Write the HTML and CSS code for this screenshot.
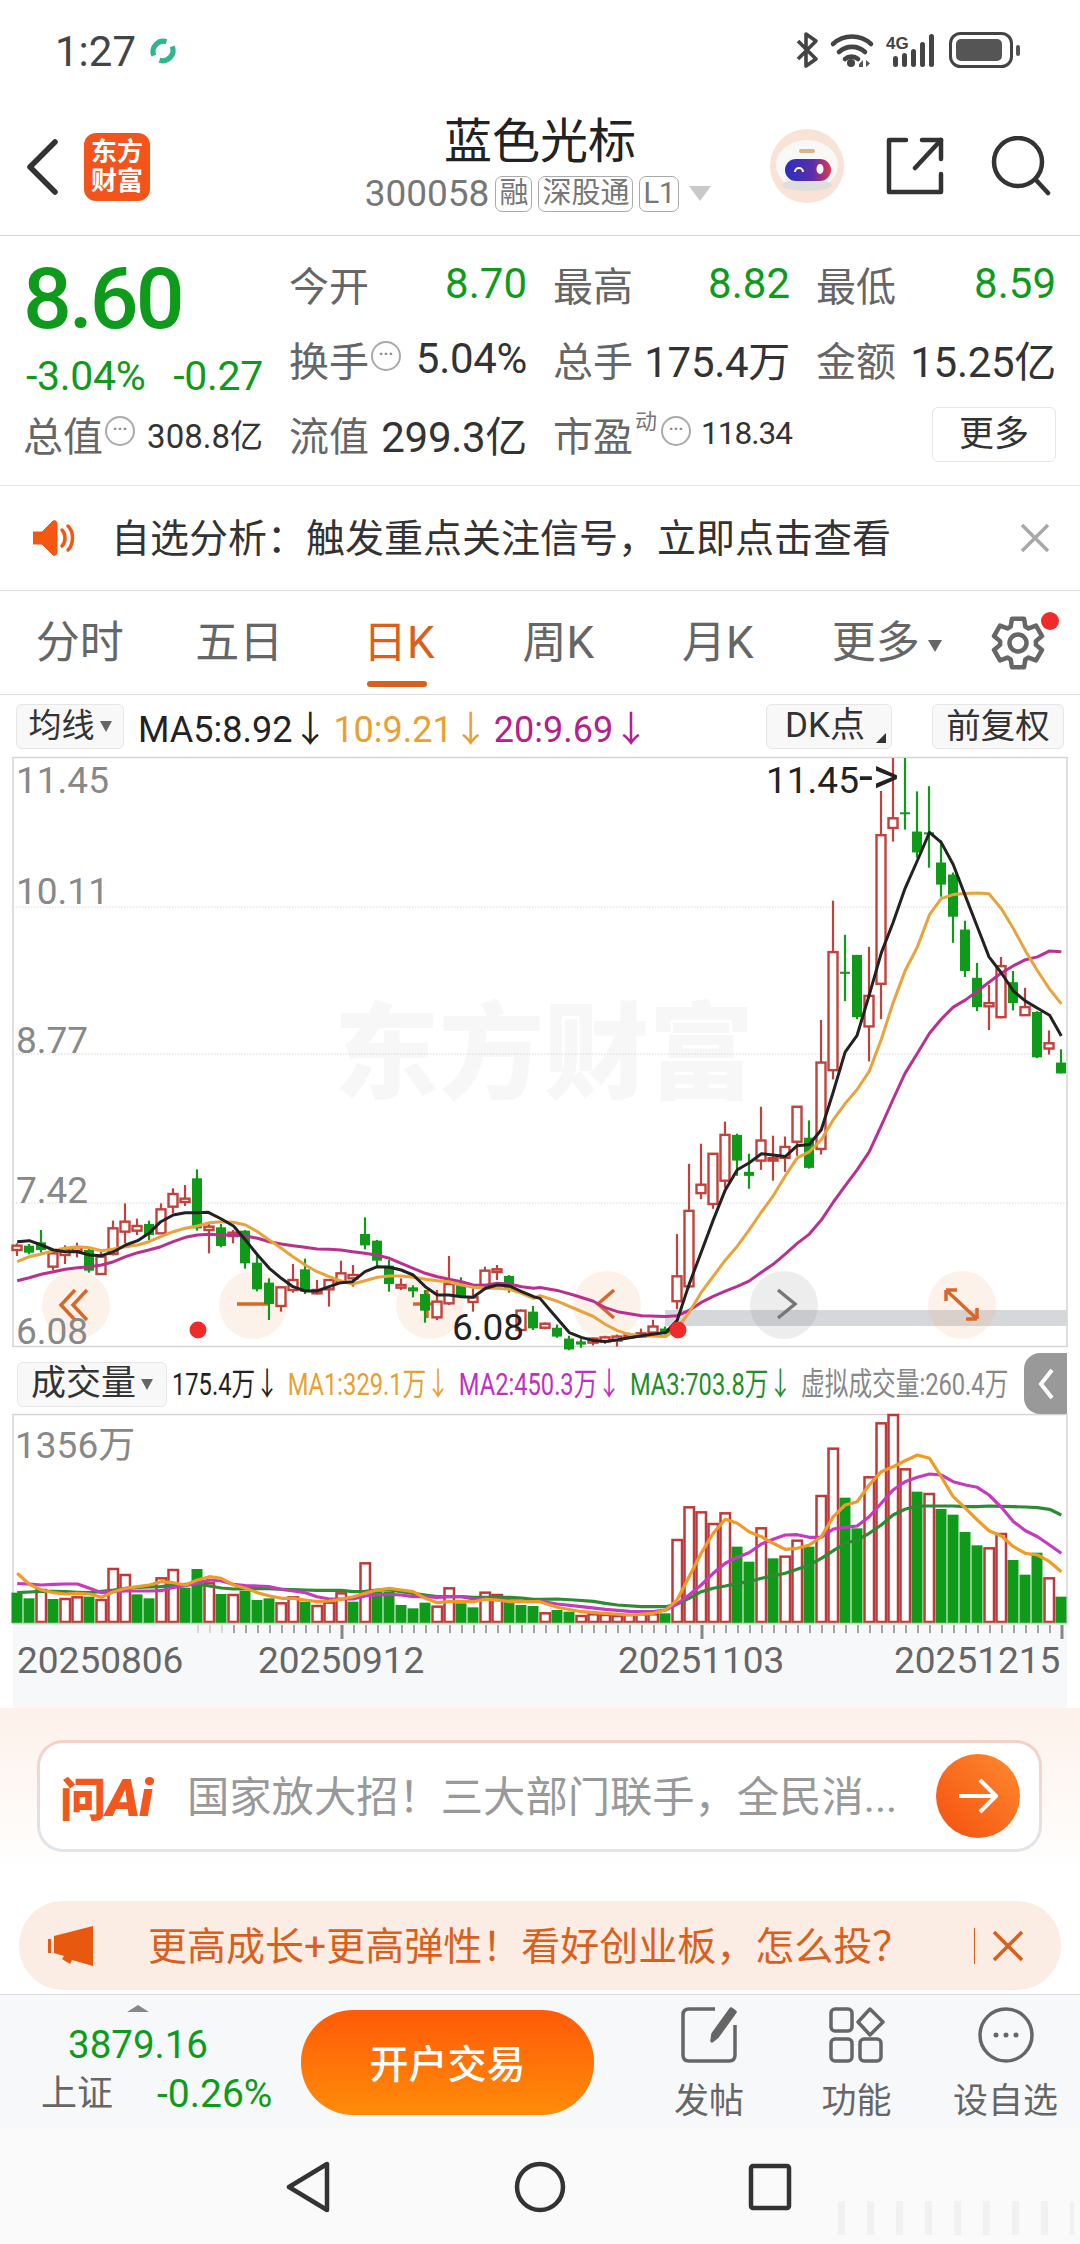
FILE: index.html
```html
<!DOCTYPE html>
<html lang="zh-CN">
<head>
    <meta charset="UTF-8">
    <meta name="viewport" content="width=device-width, initial-scale=1.0">
    <title>蓝色光标</title>
    <link rel="stylesheet" href="styles.css">
</head>
<body>
    <div class="status-bar">
        <div class="status-left">
            <span class="clock">1:27</span>
            <svg class="sync-icon" width="30" height="30" viewBox="0 0 26 26" fill="none" stroke="#2fb58f" stroke-width="4.5">
                <path d="M5 17a9 9 0 0 1 11-12"/>
                <path d="M21 9a9 9 0 0 1-11 12"/>
            </svg>
        </div>
        <svg class="status-icons" width="240" height="40" viewBox="795 30 240 40">
            <path d="M798 41 L816 59 L806 66 V34 L816 41 L798 59" fill="none" stroke="#444" stroke-width="3.6" stroke-linejoin="round"/>
            <g fill="none" stroke="#444" stroke-width="4.6" stroke-linecap="round">
                <path d="M833 44a28 28 0 0 1 38 0"/>
                <path d="M839 52a19 19 0 0 1 26 0"/>
                <path d="M845 59a10 10 0 0 1 13 0"/>
            </g>
            <circle cx="851" cy="63" r="4" fill="#444"/>
            <path d="M859 64l4-4v7h-4zM866 60l4 3.5-4 3.5z" fill="#555"/>
            <text class="net-label" x="886" y="49">4G</text>
            <g fill="#444">
                <rect x="893" y="56" width="5" height="11" rx="2.5"/>
                <rect x="902" y="53" width="5" height="14" rx="2.5"/>
                <rect x="911" y="49" width="5" height="18" rx="2.5"/>
                <rect x="920" y="42" width="5" height="25" rx="2.5"/>
                <rect x="929" y="34" width="5" height="33" rx="2.5"/>
            </g>
            <rect x="950.5" y="33.5" width="61" height="33" rx="10" fill="none" stroke="#444" stroke-width="3"/>
            <rect x="956" y="39" width="46" height="22" rx="5" fill="#555"/>
            <rect x="1016" y="45" width="4" height="11" rx="2" fill="#555"/>
        </svg>
    </div>

    <div class="top-bar">
        <div class="top-left">
            <svg width="32" height="56" viewBox="0 0 32 56" fill="none" stroke="#333" stroke-width="5.5" stroke-linecap="round" stroke-linejoin="round">
                <path d="M29 3 L4 28 L29 53"/>
            </svg>
            <div class="brand-logo">东方<br>财富</div>
        </div>
        <div class="stock-title">
            <h1>蓝色光标</h1>
            <div class="stock-sub">
                <span class="stock-code">300058</span>
                <span class="tag">融</span>
                <span class="tag">深股通</span>
                <span class="tag">L1</span>
                <span class="tri-down"></span>
            </div>
        </div>
        <div class="top-right">
            <svg width="76" height="76" viewBox="0 0 76 76">
                <defs>
                    <linearGradient id="visor" x1="0" x2="1" y1="0" y2="0">
                        <stop offset="0" stop-color="#2b2fc0"/>
                        <stop offset="0.6" stop-color="#5a2ea8"/>
                        <stop offset="1" stop-color="#dc3a4e"/>
                    </linearGradient>
                </defs>
                <circle cx="38" cy="38" r="37" fill="#f9e3d6"/>
                <ellipse cx="38" cy="37" rx="31" ry="25" fill="#f8f8f7"/>
                <ellipse cx="38" cy="57" rx="25" ry="6" fill="#dfdedc"/>
                <rect x="30" y="21" width="16" height="4" rx="2" fill="#d8b48a"/>
                <rect x="16" y="31" width="46" height="22" rx="11" fill="url(#visor)"/>
                <path d="M26 44a4 4 0 0 1 8 0" fill="none" stroke="#fff" stroke-width="2"/>
                <ellipse cx="51" cy="41" rx="3.5" ry="5" fill="#fff"/>
            </svg>
            <svg class="share-icon" width="58" height="58" viewBox="0 0 58 58" fill="none" stroke="#333" stroke-width="4.5" stroke-linecap="round" stroke-linejoin="round">
                <path d="M20 3 H3 V55 H55 V37"/>
                <path d="M36 3 H55 V22"/>
                <path d="M55 3 L29 31"/>
            </svg>
            <svg class="search-icon" width="60" height="60" viewBox="0 0 60 60" fill="none" stroke="#333" stroke-width="4.5" stroke-linecap="round">
                <circle cx="27" cy="26" r="24"/>
                <path d="M45 44 L57 57"/>
            </svg>
        </div>
    </div>

    <div class="quote">
        <div class="quote-main">
            <div class="price">8.60</div>
            <div class="price-change"><span>-3.04%</span><span>-0.27</span></div>
        </div>
        <div class="cell"><span class="lbl">今开</span><span class="num-green">8.70</span></div>
        <div class="cell"><span class="lbl">最高</span><span class="num-green">8.82</span></div>
        <div class="cell"><span class="lbl">最低</span><span class="num-green">8.59</span></div>
        <div class="cell"><span class="lbl">换手<i class="dots">···</i></span><span class="num">5.04%</span></div>
        <div class="cell"><span class="lbl">总手</span><span class="num">175.4万</span></div>
        <div class="cell"><span class="lbl">金额</span><span class="num">15.25亿</span></div>
        <div class="cell total-cell"><span class="lbl">总值<i class="dots">···</i></span><span class="num-small">308.8亿</span></div>
        <div class="cell"><span class="lbl">流值</span><span class="num">299.3亿</span></div>
        <div class="cell pe-cell"><span class="lbl">市盈<sup>动</sup><i class="dots">···</i></span><span class="num-small">118.34</span></div>
        <div class="cell more-cell"><button class="more-btn">更多</button></div>
    </div>

    <div class="notice">
        <svg width="46" height="36" viewBox="0 0 46 36">
            <path d="M0 12 H9 L20 1 C23 0 24 2 24 4 V32 C24 34 23 36 20 35 L9 24 H0z" fill="#f4570f" stroke="#f4570f" stroke-linejoin="round"/>
            <path d="M29 10c4 4 4 12 0 16M35 6c6 6 6 18 0 24" fill="none" stroke="#f4570f" stroke-width="3.5" stroke-linecap="round"/>
        </svg>
        <span class="notice-text">自选分析：触发重点关注信号，立即点击查看</span>
        <svg class="notice-close" width="30" height="30" viewBox="0 0 30 30" stroke="#a8a8a8" stroke-width="3.5">
            <path d="M2 2 L28 28 M28 2 L2 28"/>
        </svg>
    </div>

    <div class="tabs">
        <div class="tab">分时</div>
        <div class="tab">五日</div>
        <div class="tab tab-on">日K</div>
        <div class="tab">周K</div>
        <div class="tab">月K</div>
        <div class="tab tab-more">更多<i class="tab-tri"></i></div>
        <div class="tab-gear">
            <svg width="58" height="60" viewBox="-29 -30 58 60" fill="none" stroke="#666" stroke-width="4.5" stroke-linejoin="round">
                <path d="M-7.32 -16.44 L-6.05 -24.26 L6.05 -24.26 L7.32 -16.44 L10.58 -14.56 L17.98 -17.37 L24.04 -6.89 L17.9 -1.88 L17.9 1.88 L24.04 6.89 L17.98 17.37 L10.58 14.56 L7.32 16.44 L6.05 24.26 L-6.05 24.26 L-7.32 16.44 L-10.58 14.56 L-17.98 17.37 L-24.04 6.89 L-17.9 1.88 L-17.9 -1.88 L-24.04 -6.89 L-17.98 -17.37 L-10.58 -14.56 Z"/>
                <circle r="8.5"/>
            </svg>
            <span class="red-dot"></span>
        </div>
    </div>

    <div class="k-toolbar">
        <button class="tool-btn avg-btn">均线<i class="mini-tri"></i></button>
        <div class="ma-legend">
            <span class="c-black">MA5:8.92↓</span>
            <span class="c-orange">10:9.21↓</span>
            <span class="c-pink">20:9.69↓</span>
        </div>
        <button class="tool-btn dk-btn">DK点</button>
        <button class="tool-btn fq-btn">前复权</button>
    </div>

    <svg class="chart" id="kline" width="1080" height="591" viewBox="0 757 1080 591">
        <text class="watermark" x="334" y="1090">东方财富</text>
        <rect class="frame" x="13" y="757.5" width="1054" height="589"/>
        <path class="grid-line" d="M13 907H1067M13 1054H1067M13 1203H1067"/>
        <rect x="665" y="1310" width="402" height="16" fill="#d5d7db"/>
        <g fill="#f4a26a" fill-opacity="0.14">
            <circle cx="76" cy="1305" r="34"/>
            <circle cx="253" cy="1305" r="34"/>
            <circle cx="430" cy="1305" r="34"/>
            <circle cx="607" cy="1305" r="34"/>
            <circle cx="962" cy="1305" r="34"/>
        </g>
        <circle cx="784" cy="1305" r="34" fill="#808080" fill-opacity="0.14"/>
        <g fill="none" stroke="#d8682a" stroke-width="3.5">
            <path d="M75 1290 L61 1305 L75 1320 M87 1290 L73 1305 L87 1320"/>
            <path d="M237 1304 H269"/>
            <path d="M413 1304 H441 M427 1290 V1318"/>
            <path d="M614 1290 L598 1304 L614 1318"/>
            <path d="M946 1290 H957 M946 1290 V1301 M946 1290 L977 1319 M977 1319 H966 M977 1319 V1308"/>
        </g>
        <path d="M778 1290 L795 1304 L778 1318" fill="none" stroke="#777" stroke-width="3.5"/>
        <g id="candles"></g>
        <g id="kLines"></g>
        <circle cx="198" cy="1330" r="8.5" fill="#ee2a2a"/>
        <circle cx="678" cy="1330" r="8.5" fill="#ee2a2a"/>
        <text class="axis" x="16" y="793">11.45</text>
        <text class="axis" x="16" y="904">10.11</text>
        <text class="axis" x="16" y="1053">8.77</text>
        <text class="axis" x="16" y="1203">7.42</text>
        <text class="axis" x="16" y="1344">6.08</text>
        <text class="mark" x="766" y="793">11.45<tspan class="mark-arrow">-&gt;</tspan></text>
        <text class="mark" x="452" y="1340">6.08</text>
    </svg>

    <div class="vol-toolbar">
        <button class="tool-btn vol-btn">成交量<i class="mini-tri"></i></button>
        <div class="vol-legend">
            <span class="c-black">175.4万↓</span>
            <span class="c-orange">MA1:329.1万↓</span>
            <span class="c-violet">MA2:450.3万↓</span>
            <span class="c-green">MA3:703.8万↓</span>
            <span class="c-gray">虚拟成交量:260.4万</span>
        </div>
        <div class="vol-handle">
            <svg width="16" height="32" viewBox="0 0 16 32" fill="none" stroke="#fff" stroke-width="4">
                <path d="M14 2 L3 16 L14 30"/>
            </svg>
        </div>
    </div>

    <svg class="chart" id="volume" width="1080" height="294" viewBox="0 1414 1080 294">
        <rect x="13" y="1624" width="1054" height="84" fill="#f7f8fa"/>
        <rect class="frame" x="13" y="1414.5" width="1054" height="209"/>
        <g id="volBars"></g>
        <path d="M13 1623.5H1067" stroke="#b9ddb9" stroke-width="1.5"/>
        <g id="volLines"></g>
        <g id="ticks"></g>
        <text class="axis" x="15" y="1458">1356万</text>
        <text class="date" x="17" y="1673">20250806</text>
        <text class="date" x="258" y="1673">20250912</text>
        <text class="date" x="618" y="1673">20251103</text>
        <text class="date" x="894" y="1673">20251215</text>
    </svg>

    <div class="ask-area">
        <div class="ask-box">
            <span class="ask-logo">问<em>Ai</em></span>
            <span class="ask-text">国家放大招！三大部门联手，全民消...</span>
            <div class="ask-go">
                <svg width="40" height="36" viewBox="0 0 40 36" fill="none" stroke="#fff" stroke-width="4" stroke-linejoin="round">
                    <path d="M1 18 H37 M22 2 L38 18 L22 34"/>
                </svg>
            </div>
        </div>
    </div>

    <div class="promo">
        <svg width="46" height="40" viewBox="0 0 46 40" fill="#e8590f">
            <rect x="0" y="13" width="3" height="14"/>
            <path d="M6 10 L45 0 V40 L24 34 L22 38 L14 33 L16 30 L6 27z"/>
        </svg>
        <span class="promo-text">更高成长+更高弹性！看好创业板，怎么投？</span>
        <span class="promo-sep"></span>
        <svg width="32" height="32" viewBox="0 0 32 32" stroke="#d9601c" stroke-width="3.5">
            <path d="M2 2 L30 30 M30 2 L2 30"/>
        </svg>
    </div>

    <div class="bottom-bar">
        <div class="index-box">
            <i class="tri-up"></i>
            <div class="index-val">3879.16</div>
            <div class="index-row"><span class="index-name">上证</span><span class="index-pct">-0.26%</span></div>
        </div>
        <button class="trade-btn">开户交易</button>
        <div class="bottom-actions">
            <div class="action">
                <svg width="56" height="56" viewBox="0 0 56 56" fill="none" stroke="#666" stroke-width="3.5" stroke-linejoin="round">
                    <path d="M34 2 H8 Q2 2 2 8 V48 Q2 54 8 54 H48 Q54 54 54 48 V18"/>
                    <path d="M50 2 L54 5 L36 30 L31 34 L32 27z" fill="#666"/>
                </svg>
                <span>发帖</span>
            </div>
            <div class="action">
                <svg width="56" height="56" viewBox="0 0 56 56" fill="none" stroke="#666" stroke-width="3.5" stroke-linejoin="round">
                    <rect x="2" y="2" width="21" height="22" rx="4"/>
                    <path d="M41 2 L54 15 L41 28 L29 15z"/>
                    <rect x="2" y="32" width="21" height="22" rx="4"/>
                    <rect x="31" y="32" width="21" height="22" rx="4"/>
                </svg>
                <span>功能</span>
            </div>
            <div class="action">
                <svg width="56" height="56" viewBox="0 0 56 56" fill="none" stroke="#666" stroke-width="3.5">
                    <circle cx="28" cy="28" r="26"/>
                    <g fill="#666" stroke="none">
                        <circle cx="18" cy="28" r="2.5"/>
                        <circle cx="28" cy="28" r="2.5"/>
                        <circle cx="38" cy="28" r="2.5"/>
                    </g>
                </svg>
                <span>设自选</span>
            </div>
        </div>
    </div>

    <div class="nav-bar">
        <svg width="46" height="52" viewBox="0 0 46 52" fill="none" stroke="#333" stroke-width="4.5" stroke-linejoin="round">
            <path d="M41 3 V49 L3 26z"/>
        </svg>
        <svg width="52" height="52" viewBox="0 0 52 52" fill="none" stroke="#333" stroke-width="4.5">
            <circle cx="26" cy="26" r="23"/>
        </svg>
        <svg width="44" height="48" viewBox="0 0 44 48" fill="none" stroke="#333" stroke-width="4.5" stroke-linejoin="round">
            <rect x="3" y="3" width="38" height="42" rx="2"/>
        </svg>
        <span class="nav-mark"></span>
    </div>

    <script src="chart.js"></script>
</body>
</html>
```

FILE: styles.css
```css
* {
    margin: 0;
    padding: 0;
    box-sizing: border-box;
}

body {
    width: 1080px;
    height: 2244px;
    overflow: hidden;
    background: white;
    color: #333;
    font-family: Roboto, 'Noto Sans CJK SC', sans-serif;
}

button {
    font-family: inherit;
    color: #333;
    background: none;
}

i {
    font-style: normal;
}

/* Status bar */
.status-bar {
    height: 90px;
    padding: 30px 45px 0 55px;
    display: flex;
    justify-content: space-between;
    align-items: flex-start;
}

.status-left {
    display: flex;
    align-items: center;
    gap: 12px;
    height: 42px;
}

.clock {
    font-size: 42px;
    color: #444;
}

.status-icons {
    display: block;
}

.net-label {
    font-family: 'Liberation Sans', sans-serif;
    font-size: 17px;
    font-weight: bold;
    fill: #444;
}

/* Title bar */
.top-bar {
    height: 146px;
    border-bottom: 1.5px solid #d9d9d9;
    display: grid;
    grid-template-columns: 1fr auto 1fr;
    align-items: center;
    position: relative;
}

.top-left {
    display: flex;
    align-items: center;
    gap: 26px;
    padding-left: 26px;
    margin-top: 9px;
}

.brand-logo {
    width: 66px;
    height: 68px;
    border-radius: 12px;
    background: #f2541b;
    color: white;
    font-size: 26px;
    font-weight: 700;
    line-height: 29px;
    text-align: center;
    padding-top: 5px;
}

.stock-title {
    text-align: center;
    margin-top: -2px;
}

.stock-title h1 {
    font-size: 48px;
    font-weight: 400;
    line-height: 62px;
    color: #222;
}

.stock-sub {
    display: flex;
    align-items: center;
    gap: 6px;
    height: 38px;
    margin-top: 2px;
    margin-left: -4px;
}

.stock-code {
    font-size: 37px;
    color: #777;
}

.tag {
    height: 36px;
    line-height: 32px;
    padding: 0 3px;
    border: 1.5px solid #aaa;
    border-radius: 7px;
    font-size: 29px;
    color: #777;
}

.tri-down {
    width: 0;
    height: 0;
    margin-left: 4px;
    border-left: 11px solid transparent;
    border-right: 11px solid transparent;
    border-top: 15px solid #c9c9c9;
}

.top-right {
    display: flex;
    align-items: center;
    justify-content: flex-end;
    padding-right: 29px;
    margin-top: 6px;
}

.share-icon {
    margin-left: 41px;
}

.search-icon {
    margin-left: 47px;
}

/* Quote block */
.quote {
    height: 250px;
    padding: 10px 0 0 27px;
    border-bottom: 1.5px solid #e6e6e6;
    display: grid;
    grid-template-columns: 236px 238px 237px 240px;
    grid-template-rows: 75px 75px 75px;
    column-gap: 26px;
    font-size: 40px;
}

.quote-main {
    grid-row: 1 / 3;
    padding-top: 15px;
    margin-left: -4px;
}

.price {
    font-size: 86px;
    font-weight: 500;
    line-height: 76px;
    letter-spacing: -3px;
    color: #0e9b1c;
}

.price-change {
    display: flex;
    justify-content: space-between;
    width: 237px;
    margin: 18px 0 0 3px;
    font-size: 41px;
    line-height: 42px;
    letter-spacing: -0.3px;
    color: #0e9b1c;
}

.cell {
    display: flex;
    justify-content: space-between;
    align-items: center;
    white-space: nowrap;
}

.total-cell {
    margin-left: -4px;
}

.total-cell .num-small {
    font-size: 33px;
}

.lbl {
    display: flex;
    align-items: center;
    font-size: 40px;
    color: #666;
}

.num-green {
    font-size: 42px;
    color: #0e9b1c;
}

.num {
    font-size: 42px;
    letter-spacing: -0.3px;
    color: #333;
}

.num-small {
    font-size: 31.5px;
    color: #333;
}

.dots {
    width: 30px;
    height: 30px;
    margin: -6px 0 0 2px;
    border: 2px solid #aaa;
    border-radius: 50%;
    font-size: 16px;
    font-weight: 700;
    line-height: 22px;
    text-align: center;
    color: #888;
}

.pe-cell {
    justify-content: flex-start;
}

.pe-cell .num-small {
    margin-left: 10px;
    letter-spacing: -1px;
}

.pe-cell sup {
    font-size: 22px;
    line-height: 22px;
    margin: -24px 0 0 2px;
    color: #777;
}

.pe-cell .dots {
    margin-left: 4px;
}

.more-cell {
    justify-content: flex-end;
    padding-top: 2px;
}

.more-btn {
    width: 124px;
    height: 55px;
    border: 1.5px solid #e6e6e6;
    border-radius: 6px;
    font-size: 35px;
    line-height: 50px;
}

/* Notice row */
.notice {
    height: 105px;
    padding: 0 30px 0 33px;
    border-bottom: 1.5px solid #dcdcdc;
    display: flex;
    align-items: center;
}

.notice-text {
    flex: 1;
    margin: -7px 0 0 32px;
    font-size: 39px;
    color: #333;
}

/* Period tabs */
.tabs {
    height: 104px;
    border-bottom: 1.5px solid #dcdcdc;
    display: grid;
    grid-template-columns: repeat(6, 159.5px) 1fr;
    align-items: center;
    position: relative;
}

.tab {
    position: relative;
    height: 100%;
    line-height: 104px;
    text-align: center;
    font-size: 44px;
    color: #666;
}

.tab-more {
    padding-left: 19px;
    white-space: nowrap;
}

.tab-on {
    color: #d9601c;
}

.tab-on::after {
    content: "";
    position: absolute;
    left: 48px;
    bottom: 8px;
    width: 60px;
    height: 6px;
    border-radius: 3px;
    background: #d9601c;
}

.tab-tri {
    display: inline-block;
    margin-left: 8px;
    vertical-align: 6px;
    border-left: 7px solid transparent;
    border-right: 7px solid transparent;
    border-top: 12px solid #666;
}

.tab-gear {
    position: relative;
    display: flex;
    justify-content: flex-start;
    padding-left: 32px;
}

.red-dot {
    position: absolute;
    left: 84px;
    top: -1px;
    width: 18px;
    height: 18px;
    border-radius: 50%;
    background: #ee2a2a;
}

/* Chart toolbars */
.k-toolbar {
    height: 62px;
    padding: 0 16px;
    display: flex;
    align-items: center;
}

.tool-btn {
    flex: none;
    height: 45px;
    border: 1.5px solid #e6e6e6;
    border-radius: 6px;
    background: #f8f8f9;
    font-size: 33px;
    line-height: 40px;
    white-space: nowrap;
}

.avg-btn {
    width: 108px;
}

.mini-tri {
    display: inline-block;
    margin-left: 5px;
    vertical-align: 5px;
    border-left: 6px solid transparent;
    border-right: 6px solid transparent;
    border-top: 11px solid #666;
}

.ma-legend {
    flex: 1;
    display: flex;
    gap: 5px;
    margin-left: 14px;
    font-size: 36px;
    white-space: nowrap;
}

.dk-btn {
    position: relative;
    width: 126px;
    margin-right: 40px;
    padding-right: 8px;
    font-size: 35px;
}

.dk-btn::after {
    content: "";
    position: absolute;
    right: 5px;
    bottom: 5px;
    border-left: 10px solid transparent;
    border-bottom: 10px solid #333;
}

.fq-btn {
    width: 132px;
    font-size: 34.5px;
}

.c-black { color: #222; }
.c-orange { color: #e8a030; }
.c-pink { color: #b5208c; }
.c-violet { color: #c030c0; }
.c-green { color: #1f8f2a; }
.c-gray { color: #888; }

.vol-toolbar {
    height: 66px;
    padding: 0 0 0 17px;
    display: flex;
    align-items: center;
    position: relative;
}

.vol-btn {
    width: 150px;
    margin-top: 6px;
    font-size: 35px;
}

.vol-legend {
    display: flex;
    gap: 12px;
    margin-left: 5px;
    font-size: 32px;
    white-space: nowrap;
    transform: scaleX(0.74);
    transform-origin: left center;
}

.vol-handle {
    position: absolute;
    right: 13px;
    top: 5px;
    width: 43px;
    height: 61px;
    border-radius: 16px 0 0 16px;
    background: #999;
    display: flex;
    align-items: center;
    justify-content: center;
}

/* Charts */
.chart {
    display: block;
    overflow: visible;
}

.frame {
    fill: none;
    stroke: #d4d4d4;
    stroke-width: 1.5;
}

.grid-line {
    fill: none;
    stroke: #d8d8d8;
    stroke-width: 1;
    stroke-dasharray: 1.5 1.5;
}

.watermark {
    font-size: 105px;
    font-weight: 900;
    fill: #f7f7f7;
}

.axis {
    font-size: 37px;
    fill: #888;
}

.mark {
    font-size: 37px;
    fill: #222;
}

.mark-arrow {
    font-size: 50px;
}

.date {
    font-size: 37px;
    fill: #666;
}

/* Ask box */
.ask-area {
    height: 193px;
    padding: 32px 38px 0 37px;
    background: linear-gradient(#fdf1ea 0%, #fff 85%);
}

.ask-box {
    height: 112px;
    padding: 0 19px 0 20px;
    border: 3px solid transparent;
    border-radius: 26px;
    background:
        linear-gradient(#fff, #fff) padding-box,
        linear-gradient(#f5cfc6, #dfe6ec) border-box;
    display: flex;
    align-items: center;
}

.ask-logo {
    width: 102px;
    font-size: 46px;
    font-weight: 900;
    color: #f2571d;
    white-space: nowrap;
}

.ask-logo em {
    font-size: 52px;
    letter-spacing: -1px;
}

.ask-text {
    flex: 1;
    margin: -6px 0 0 25px;
    font-size: 42.3px;
    color: #999;
    white-space: nowrap;
    overflow: hidden;
}

.ask-go {
    width: 84px;
    height: 84px;
    border-radius: 50%;
    background: linear-gradient(45deg, #f4500e, #ff8a30);
    display: flex;
    align-items: center;
    justify-content: center;
}

/* Promo banner */
.promo {
    height: 89px;
    margin: 0 19px;
    padding: 0 37px 0 29px;
    border-radius: 44px;
    background: #fbece4;
    display: flex;
    align-items: center;
}

.promo-text {
    flex: 1;
    margin: -6px 0 0 54px;
    font-size: 39px;
    color: #d9601c;
    white-space: nowrap;
}

.promo-sep {
    width: 1.5px;
    height: 36px;
    margin-right: 17px;
    background: #d9601c;
}

/* Bottom bar */
.bottom-bar {
    height: 135px;
    margin-top: 4px;
    border-top: 1.5px solid #dcdce4;
    background: #f7f8fa;
    display: flex;
    align-items: flex-start;
}

.index-box {
    position: relative;
    width: 301px;
    padding: 29px 0 0 41px;
}

.tri-up {
    position: absolute;
    left: 127px;
    top: 10px;
    border-left: 11px solid transparent;
    border-right: 11px solid transparent;
    border-bottom: 7px solid #888;
}

.index-val {
    margin-left: 27px;
    font-size: 38.5px;
    line-height: 42px;
    color: #0e9b1c;
}

.index-row {
    display: flex;
    gap: 44px;
    margin-top: 6px;
    align-items: center;
    font-size: 36px;
    line-height: 44px;
}

.index-name {
    color: #666;
}

.index-pct {
    font-size: 39px;
    color: #0e9b1c;
}

.trade-btn {
    width: 293px;
    height: 105px;
    margin-top: 15px;
    padding-bottom: 4px;
    border: none;
    border-radius: 52px;
    background: linear-gradient(#ff5a08, #ff8c08);
    color: white;
    font-size: 39px;
    font-weight: 500;
}

.bottom-actions {
    flex: 1;
    display: flex;
    margin-left: 42px;
}

.action {
    width: 149px;
    padding-top: 12px;
    display: flex;
    flex-direction: column;
    align-items: center;
    font-size: 35px;
    line-height: 46px;
    color: #666;
}

.action:first-child {
    width: 146px;
}

.action svg {
    margin-bottom: 16px;
}

/* Android nav bar */
.nav-bar {
    position: relative;
    height: 115px;
    background: #fafafa;
    display: flex;
    align-items: center;
    padding: 0 0 0 286px;
    gap: 182px;
}

/* faint image stamp in the corner */
.nav-mark {
    position: absolute;
    left: 838px;
    top: 72px;
    width: 236px;
    height: 34px;
    background: repeating-linear-gradient(90deg, #f1f1f1 0 7px, transparent 7px 29px);
}
```

FILE: chart.js
```js
// numbers below were read off the screenshot: the left half and the right half
// of the chart have their own scale
var SVG_GREEN = '#0f9a1a';
var SVG_RED = '#c4403a';

function candleX(i) { return 17 + 12 * i; }

function yLeft(v) { return 1100 + v / 3; }
function yRight(v) { return 750 + v / 2.489; }
function yVol(v) { return 1400 + v / 3; }

// type, body top, body bottom, wick top, wick bottom
var candles = [
    ['r',437,450,430,468],['g',437,458,432,463],['g',427,450,390,458],['r',460,500,450,510],
    ['r',447,465,436,492],['r',442,452,428,472],['g',450,512,445,518],['r',470,522,455,525],
    ['r',385,462,362,466],['r',365,395,310,430],['r',378,392,356,405],['g',372,405,362,420],
    ['r',328,400,310,402],['r',282,320,265,340],['r',296,306,255,318],['g',235,385,208,392],
    ['r',380,390,372,460],['g',382,438,372,442],['r',398,408,390,430],['g',392,490,390,506],
    ['g',488,568,462,574],['g',548,612,535,660],['r',562,618,560,635],['r',540,570,492,578],
    ['g',508,575,476,582],['r',570,580,540,583],['r',540,568,540,620],['r',520,548,482,552],
    ['r',525,535,495,560],['g',402,436,352,448],['g',422,482,420,498],['g',497,552,480,575],
    ['r',555,563,535,570],['g',562,574,556,592],['g',582,632,570,668],['r',605,652,570,660],
    ['r',552,610,468,615],['g',556,590,532,594],['r',592,606,565,635],['r',512,555,500,560],
    ['r',508,516,495,540],['g',528,570,525,578],['r',632,690,628,692],['g',635,685,618,690]
];

var candlesRight = [
    ['r',1428,1438,1425,1442],['g',1438,1460,1430,1463],['g',1465,1492,1458,1494],['g',1472,1480,1465,1488],
    ['r',1465,1475,1462,1482],['r',1462,1472,1458,1478],['r',1460,1470,1455,1485],['r',1456,1462,1450,1464],
    ['r',1452,1460,1440,1462],['r',1435,1450,1418,1455],['g',1440,1452,1435,1455],['r',1310,1372,1205,1392],
    ['r',1147,1335,1030,1340],['r',1082,1103,980,1118],['r',1005,1130,1005,1142],['r',958,1072,925,1090],
    ['g',958,1022,955,1060],['g',1050,1060,1005,1092],['r',972,1022,888,1045],['r',1016,1022,960,1072],
    ['r',988,1015,962,1050],['r',888,975,888,1010],['g',965,1040,922,1042],['r',778,993,672,1007],
    ['r',503,797,375,820],['g',552,554,460,625],['g',510,665,510,670],['r',612,688,490,775],
    ['r',212,582,102,670],['r',170,194,20,228],['g',155,160,20,198],['g',203,255,103,268],
    ['g',205,210,90,293],['g',280,335,225,365],['g',310,415,305,480],['g',447,550,425,565],
    ['g',567,640,530,650],['r',630,638,585,697],['r',538,665,515,668],['g',578,630,550,648],
    ['r',640,660,592,662],['g',652,765,650,767],['r',730,743,698,758],['g',778,805,745,805]
];

// MA lines, pairs of x,y
var ma5L = [50,425,85,422,120,435,155,450,190,455,225,455,260,465,295,467,330,455,365,435,400,422,432,400,467,365,503,345,538,338,573,338,605,337,643,357,678,378,713,420,748,465,782,505,817,535,851,560,886,573,921,573,956,560,990,548,1024,545,1060,515,1096,500,1131,502,1165,510,1200,525,1235,560,1270,585,1304,585,1340,590,1374,592,1410,565,1444,555,1480,558,1515,575,1550,590];
var ma5R = [0,1365,30,1395,85,1450,120,1462,155,1470,190,1472,225,1468,295,1458,365,1450,398,1420,433,1330,468,1250,503,1170,538,1095,573,1045,607,1028,643,1005,677,1008,712,1012,747,985,782,982,817,945,852,850,886,752,921,710,956,610,991,505,1025,430,1060,345,1096,275,1131,205,1165,230,1200,285,1236,365,1270,440,1304,515,1340,555,1375,600,1410,625,1445,643,1480,660,1514,712];
var ma10L = [50,485,85,470,120,462,155,452,190,445,225,440,260,443,295,452,330,447,365,440,400,435,432,425,467,410,503,395,538,385,573,378,608,368,643,365,678,367,713,375,748,395,782,420,817,445,851,470,886,495,921,515,956,530,990,543,1024,552,1060,542,1096,532,1131,528,1165,528,1200,532,1235,538,1270,542,1304,545,1340,555,1374,562,1410,565,1444,565,1480,568,1515,580,1550,595];
var ma10R = [0,1358,50,1372,100,1390,155,1410,190,1430,225,1445,260,1455,295,1458,365,1460,398,1440,433,1400,468,1350,503,1310,538,1270,573,1235,607,1195,643,1150,677,1110,712,1060,747,1015,782,1000,817,970,852,920,886,880,921,845,956,800,991,720,1025,630,1060,550,1096,490,1131,410,1165,370,1200,360,1236,357,1270,356,1304,358,1340,395,1375,445,1410,500,1445,550,1480,595,1514,632];
var ma20L = [50,542,85,533,120,523,155,515,190,508,225,503,260,500,295,495,330,485,365,470,400,458,432,450,467,440,503,425,538,412,573,405,608,403,643,405,678,405,713,408,748,415,782,425,817,432,851,437,886,442,921,447,956,448,990,450,1024,455,1060,460,1096,466,1131,475,1165,490,1200,505,1235,520,1270,530,1304,538,1340,545,1374,555,1410,556,1444,550,1480,552,1515,560,1550,565];
var ma20R = [0,1338,50,1345,100,1357,155,1372,190,1388,225,1398,295,1408,365,1410,398,1408,433,1395,468,1375,503,1360,538,1347,573,1335,607,1322,643,1300,677,1280,712,1255,747,1228,782,1205,817,1170,852,1125,886,1085,921,1045,956,1000,991,935,1025,870,1060,805,1096,755,1131,705,1165,670,1200,640,1236,622,1270,600,1304,578,1340,555,1375,537,1410,522,1445,515,1480,500,1514,502];

var volBars = [
    ['g',578],['g',595],['r',570],['g',597],['r',597],['r',592],['g',590],['r',600],['r',507],['r',525],['g',583],
    ['g',595],['r',535],['r',510],['g',563],['g',507],['r',550],['g',582],['r',585],['g',572],['g',600],['g',595],
    ['r',610],['r',592],['g',605],['r',618],['r',608],['r',580],['g',605],['r',490],['g',575],['g',575],['g',615],
    ['g',625],['g',608],['r',620],['r',565],['g',610],['g',622],['r',578],['r',585],['g',605],['g',615],['g',618],
    ['r',640],['g',630],['g',635],['r',648],['r',643],['r',645],['r',648],['r',645],['r',643],['r',643],['g',640],
    ['r',420],['r',322],['r',337],['r',372],['r',340],['g',440],['g',485],['r',385],['g',475],['r',470],['r',422],
    ['g',440],['r',288],['r',146],['g',293],['g',385],['r',232],['r',70],['r',45],['r',208],['g',275],['r',282],
    ['g',327],['g',344],['g',396],['g',436],['r',445],['r',402],['g',480],['g',524],['g',458],['r',535],['g',590]
];

var vol1L = [50,520,85,553,120,570,155,578,190,582,225,580,260,582,295,592,330,575,365,565,400,560,433,555,468,545,503,548,538,555,573,540,608,530,643,535,678,555,713,565,748,578,783,588,818,595,852,595,887,600,921,605,956,603,991,598,1026,590,1060,580,1096,570,1131,565,1165,570,1200,575,1235,595,1270,608,1305,605,1340,605,1375,605,1410,598,1445,600,1480,605,1515,605,1550,605];
var vol1R = [0,605,50,622,120,635,190,640,260,645,330,640,365,630,398,600,433,530,468,460,503,400,538,358,573,370,607,395,643,410,677,430,712,448,747,445,782,435,817,410,852,350,886,315,921,305,956,255,991,215,1025,200,1060,182,1096,165,1131,175,1165,230,1200,290,1236,325,1270,360,1304,392,1340,408,1375,440,1410,460,1445,465,1480,485,1514,515];
var vol2L = [50,551,85,552,120,555,155,553,190,552,225,552,260,565,295,578,330,575,365,573,400,573,433,573,468,572,503,562,538,557,573,550,608,540,643,543,678,553,713,557,748,558,783,560,818,568,852,573,887,578,921,590,956,597,991,597,1026,597,1060,588,1096,584,1131,583,1165,585,1200,590,1235,590,1270,592,1305,590,1340,590,1375,597,1410,597,1445,600,1480,602,1515,603,1550,605];
var vol2R = [0,603,50,612,120,620,190,628,260,634,330,635,365,630,398,612,433,585,468,555,503,520,538,490,573,472,607,458,643,432,677,418,712,405,747,404,782,412,817,412,852,387,886,382,921,378,956,350,991,310,1025,270,1060,245,1096,232,1131,222,1165,225,1200,245,1236,255,1270,262,1304,285,1340,322,1375,365,1410,392,1445,410,1480,435,1514,460];
var vol3L = [50,578,85,576,120,574,155,574,190,575,225,577,260,578,295,574,330,570,365,565,400,562,433,561,468,560,503,555,538,553,573,552,608,558,643,564,678,567,713,566,748,566,783,566,818,568,852,569,887,570,921,571,956,571,991,571,1026,575,1060,574,1096,570,1131,570,1165,575,1200,580,1235,585,1270,590,1305,590,1340,590,1375,592,1410,592,1445,592,1480,592,1515,594,1550,598];
var vol3R = [0,598,50,597,100,600,155,604,190,610,225,615,295,620,365,620,398,612,433,595,468,575,503,565,538,558,573,550,607,545,643,535,677,528,712,520,747,508,782,495,817,475,852,452,886,430,921,420,956,400,991,375,1025,345,1060,328,1096,318,1131,318,1165,318,1200,318,1236,320,1270,320,1304,318,1340,319,1375,320,1410,321,1445,323,1480,328,1514,345];

function drawCandle(c, i, toY) {
    var x = candleX(i);
    var color = c[0] === 'g' ? SVG_GREEN : SVG_RED;
    var top = toY(c[1]), bot = toY(c[2]);
    var out = '<line x1="' + x + '" x2="' + x + '" y1="' + toY(c[3]) + '" y2="' + toY(c[4]) + '" stroke="' + color + '" stroke-width="2.2"/>';
    if (c[0] === 'g') {
        out += '<rect x="' + (x - 5) + '" y="' + top + '" width="10" height="' + Math.max(bot - top, 2) + '" fill="' + color + '"/>';
    } else {
        out += '<rect x="' + (x - 4.5) + '" y="' + top + '" width="9" height="' + (bot - top) + '" fill="#fff" stroke="' + color + '" stroke-width="2.4"/>';
    }
    return out;
}

function points(data, toX, toY) {
    var out = [];
    for (var i = 0; i < data.length; i += 2) {
        out.push(toX(data[i]).toFixed(1) + ',' + toY(data[i + 1]).toFixed(1));
    }
    return out;
}

function xLeft(v) { return v / 2.904; }
function xRight(v) { return 540 + v / 2.904; }

function line(left, right, yA, yB, color, width) {
    var pts = points(left, xLeft, yA).concat(points(right, xRight, yB));
    return '<polyline points="' + pts.join(' ') + '" fill="none" stroke="' + color + '" stroke-width="' + width + '" stroke-linejoin="round"/>';
}

var html = '';
candles.forEach(function (c, i) { html += drawCandle(c, i, yLeft); });
candlesRight.forEach(function (c, i) { html += drawCandle(c, i + 44, yRight); });
document.getElementById('candles').innerHTML = html;

document.getElementById('kLines').innerHTML =
    line(ma20L, ma20R, yLeft, yRight, '#b9308f', 3) +
    line(ma10L, ma10R, yLeft, yRight, '#e8a33d', 3) +
    line(ma5L, ma5R, yLeft, yRight, '#222', 3);

var bars = '';
volBars.forEach(function (b, i) {
    var x = candleX(i), top = yVol(b[1]);
    if (b[0] === 'g') {
        bars += '<rect x="' + (x - 5.5) + '" y="' + top + '" width="11" height="' + (1623 - top) + '" fill="' + SVG_GREEN + '"/>';
    } else {
        bars += '<rect x="' + (x - 4.5) + '" y="' + top + '" width="9.5" height="' + (1622 - top) + '" fill="#fff" stroke="#c0393a" stroke-width="2.5"/>';
    }
});
document.getElementById('volBars').innerHTML = bars;

document.getElementById('volLines').innerHTML =
    line(vol3L, vol3R, yVol, yVol, '#2f8a34', 3.2) +
    line(vol2L, vol2R, yVol, yVol, '#c43bc0', 3.2) +
    line(vol1L, vol1R, yVol, yVol, '#f09a28', 3.2);

var ticks = '';
for (var t = 15; t < 88; t++) {
    var major = t === 27 || t === 57 || t === 87;
    var tx = candleX(t) + 1;
    ticks += '<line x1="' + tx + '" x2="' + tx + '" y1="1625" y2="' + (major ? 1639 : 1633) + '" stroke="' + (t < 18 ? '#ccc' : '#888') + '" stroke-width="' + (major ? 3 : 1.5) + '"/>';
}
document.getElementById('ticks').innerHTML = ticks;
```
